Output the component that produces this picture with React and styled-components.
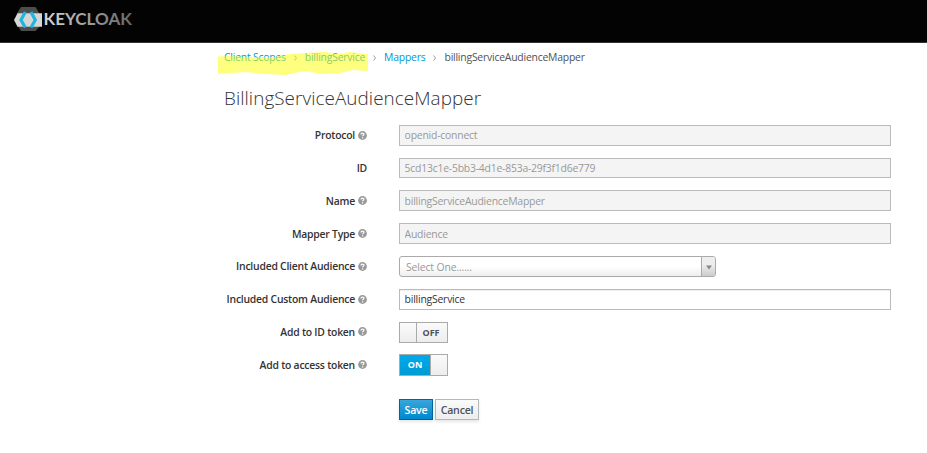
import React from "react";
import styled, { createGlobalStyle, css } from "styled-components";

const Global = createGlobalStyle`
  * { box-sizing: border-box; }
  body { margin: 0; background: #fff; color: #333; font: 10.4px/18px "Open Sans", sans-serif; }
`;

const Page = styled.div`
  height: 453px;
  overflow: hidden;
`;

const Header = styled.header`
  height: 43px;
  padding: 6px 13px;
  background: #030303;
  border-bottom: 1px solid #333;
`;

const Main = styled.main`
  padding: 5px 36px 0 224px;
`;

const Breadcrumb = styled.nav`
  position: relative;
  display: flex;
  align-items: center;
  height: 18px;
  letter-spacing: -0.21px;
`;

const Crumb = styled.a`
  color: #0099d3;
  white-space: nowrap;
`;

const CurrentCrumb = styled.span`
  color: #4d5258;
`;

const Separator = styled.svg`
  flex: none;
  width: 19px;
  height: 9px;
`;

const Highlight = styled.svg`
  position: absolute;
  left: -10px;
  top: -2px;
`;

const Title = styled.h1`
  margin: 18px 0 0;
  height: 28px;
  font-size: 18.9px;
  line-height: 28px;
  font-weight: 300;
  letter-spacing: 0.05px;
  color: #333;
`;

const Form = styled.form`
  display: grid;
  grid-auto-rows: 32.8px;
  margin-top: 12.8px;
`;

const Row = styled.div`
  display: grid;
  grid-template-columns: 143px 1fr;
  column-gap: 32px;
  align-items: start;
`;

const Label = styled.label`
  display: flex;
  justify-content: flex-end;
  align-items: center;
  gap: 3px;
  height: 20.8px;
  font-weight: 600;
  letter-spacing: -0.23px;
  white-space: nowrap;
  color: #333;
`;

const Input = styled.input`
  width: 100%;
  height: 20.8px;
  padding: 0 5px 0 4.6px;
  border: 1px solid #bbb;
  border-radius: 0;
  background: #fff;
  color: #333;
  font: inherit;
  letter-spacing: -0.21px;
  box-shadow: inset 0 1px 1px rgba(0, 0, 0, 0.075);
  &:disabled { background: #f4f4f4; color: #999; box-shadow: none; }
`;

const Select = styled.div`
  display: flex;
  width: 317px;
  height: 21px;
  border: 1px solid #aaa;
  border-radius: 3px;
  overflow: hidden;
  background: linear-gradient(#fff 50%, #eee);
  color: #999;
  letter-spacing: -0.13px;
`;

const SelectText = styled.span`
  flex: 1;
  padding-left: 6px;
  line-height: 20px;
`;

const SelectArrow = styled.span`
  display: grid;
  place-items: center;
  width: 14px;
  padding-top: 3px;
  border-left: 1px solid #aaa;
  background: linear-gradient(#eee 40%, #ccc);
`;

const Toggle = styled.div`
  display: flex;
  width: 49px;
  height: 21.3px;
  border: 1px solid #aaa;
  font-size: 9px;
  font-weight: 700;
  line-height: 19px;
`;

const Knob = styled.span`
  width: 17px;
  background: linear-gradient(#fafafa, #ededed);
  ${(p) => (p.$on ? css`border-left: 1px solid #aaa;` : css`border-right: 1px solid #aaa;`)}
`;

const ToggleText = styled.span`
  flex: 1;
  padding-right: ${(p) => (p.$on ? "0" : "2px")};
  text-align: center;
  color: ${(p) => (p.$on ? "#fff" : "#4d5258")};
  background: ${(p) => (p.$on ? "linear-gradient(#00a9ec, #009bd3)" : "linear-gradient(#fafafa, #ededed)")};
`;

const Actions = styled.div`
  display: flex;
  gap: 2px;
  margin: 12px 0 0 175px;
`;

const Button = styled.button`
  height: 21px;
  width: ${(p) => (p.$primary ? "34px" : "44px")};
  padding: 1px 0 0;
  border: 1px solid ${(p) => (p.$primary ? "#00659c" : "#b7b7b7")};
  border-radius: 0;
  background: ${(p) => (p.$primary ? "linear-gradient(#39a5dc, #0088ce)" : "linear-gradient(#fafafa, #ededed)")};
  color: ${(p) => (p.$primary ? "#fff" : "#4d5258")};
  font: 600 10.6px/18px "Open Sans", sans-serif;
  letter-spacing: -0.2px;
  box-shadow: 0 2px 3px rgba(3, 3, 3, 0.1);
`;

const Logo = () => (
  <svg width="122" height="27" viewBox="0 0 122 27" role="img" aria-label="Keycloak">
    <defs>
      <linearGradient id="word" x1="30" x2="119" y1="0" y2="0" gradientUnits="userSpaceOnUse">
        <stop offset="0" stopColor="#d8d8d8" />
        <stop offset="1" stopColor="#666" />
      </linearGradient>
    </defs>
    <path d="M8 1h14.500l4 6.500v13l-4 4.500H8l-4-6V7.500z" fill="#4d4d4d" />
    <path d="M4.500 7.300H29v13.400H4.500L1 14z" fill="#d6d6d6" />
    <path d="M12.300 6L8 14l4.300 7.500M18 6l4.300 8-4.300 7.500" fill="none" stroke="#20b5dc" strokeWidth="3.200" />
    <text x="30.500" y="19" textLength="88.500" lengthAdjust="spacingAndGlyphs" fontFamily="Lato, sans-serif" fontWeight="700" fontSize="17" fill="url(#word)">KEYCLOAK</text>
  </svg>
);

const Help = () => (
  <svg width="9" height="9" viewBox="0 0 9 9">
    <circle cx="4.500" cy="4.500" r="4.400" fill="#999" />
    <path d="M3 3.500C3 1.700 6 1.800 6 3.300 6 4.300 4.600 4.100 4.600 5.300M4.600 6.200v1.200" fill="none" stroke="#fff" strokeWidth="1.200" />
  </svg>
);

const Chevron = () => (
  <Separator viewBox="0 0 19 9">
    <path d="M8.500 2.500l2 2.500-2 2.500" fill="none" stroke="#9c9c9c" />
  </Separator>
);

const Field = ({ label, help = true, children }) => (
  <Row>
    <Label>{label}{help && <Help />}</Label>
    {children}
  </Row>
);

const Switch = ({ on }) => (
  <Toggle>
    {!on && <Knob />}
    <ToggleText $on={on}>{on ? "ON" : "OFF"}</ToggleText>
    {on && <Knob $on />}
  </Toggle>
);

export default function App() {
  return (
    <Page>
      <Global />
      <Header><Logo /></Header>
      <Main>
        <Breadcrumb>
          <Crumb>Client Scopes</Crumb><Chevron />
          <Crumb>billingService</Crumb><Chevron />
          <Crumb>Mappers</Crumb><Chevron />
          <CurrentCrumb>billingServiceAudienceMapper</CurrentCrumb>
          <Highlight width="160" height="32" viewBox="214 46 160 32">
            <path d="M218 56.500L230 56 250 57 275 57 290 54 305 53 325 52 338 54 350 52 368 54V71L352 70 340 73 322 74 305 71 285 75 265 74 245 72 218 74z" fill="#ff0" fillOpacity=".5" />
          </Highlight>
        </Breadcrumb>
        <Title>BillingServiceAudienceMapper</Title>
        <Form>
          <Field label="Protocol"><Input disabled defaultValue="openid-connect" /></Field>
          <Field label="ID" help={false}><Input disabled defaultValue="5cd13c1e-5bb3-4d1e-853a-29f3f1d6e779" /></Field>
          <Field label="Name"><Input disabled defaultValue="billingServiceAudienceMapper" /></Field>
          <Field label="Mapper Type"><Input disabled defaultValue="Audience" /></Field>
          <Field label="Included Client Audience">
            <Select>
              <SelectText>Select One......</SelectText>
              <SelectArrow><svg width="6" height="5"><path d="M0 .5h6L3 4.500z" fill="#888" /></svg></SelectArrow>
            </Select>
          </Field>
          <Field label="Included Custom Audience"><Input defaultValue="billingService" /></Field>
          <Field label="Add to ID token"><Switch /></Field>
          <Field label="Add to access token"><Switch on /></Field>
        </Form>
        <Actions>
          <Button type="button" $primary>Save</Button>
          <Button type="button">Cancel</Button>
        </Actions>
      </Main>
    </Page>
  );
}
